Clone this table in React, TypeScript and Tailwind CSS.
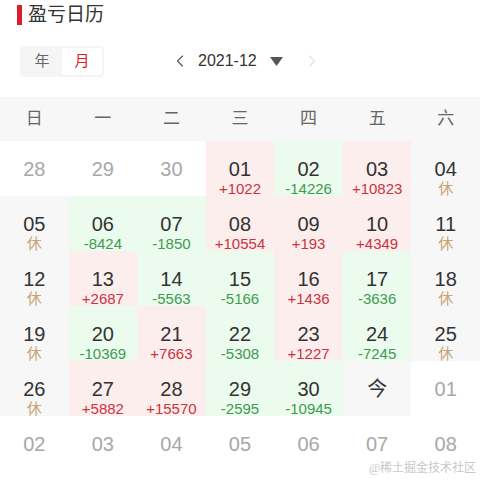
import { ChevronLeft, ChevronRight } from "lucide-react";

type Day = {
  d: string;
  v?: string;
  kind: "out" | "rest" | "up" | "down" | "today";
};

const rows: Day[][] = [
  [
    { d: "28", kind: "out" },
    { d: "29", kind: "out" },
    { d: "30", kind: "out" },
    { d: "01", v: "+1022", kind: "up" },
    { d: "02", v: "-14226", kind: "down" },
    { d: "03", v: "+10823", kind: "up" },
    { d: "04", v: "休", kind: "rest" },
  ],
  [
    { d: "05", v: "休", kind: "rest" },
    { d: "06", v: "-8424", kind: "down" },
    { d: "07", v: "-1850", kind: "down" },
    { d: "08", v: "+10554", kind: "up" },
    { d: "09", v: "+193", kind: "up" },
    { d: "10", v: "+4349", kind: "up" },
    { d: "11", v: "休", kind: "rest" },
  ],
  [
    { d: "12", v: "休", kind: "rest" },
    { d: "13", v: "+2687", kind: "up" },
    { d: "14", v: "-5563", kind: "down" },
    { d: "15", v: "-5166", kind: "down" },
    { d: "16", v: "+1436", kind: "up" },
    { d: "17", v: "-3636", kind: "down" },
    { d: "18", v: "休", kind: "rest" },
  ],
  [
    { d: "19", v: "休", kind: "rest" },
    { d: "20", v: "-10369", kind: "down" },
    { d: "21", v: "+7663", kind: "up" },
    { d: "22", v: "-5308", kind: "down" },
    { d: "23", v: "+1227", kind: "up" },
    { d: "24", v: "-7245", kind: "down" },
    { d: "25", v: "休", kind: "rest" },
  ],
  [
    { d: "26", v: "休", kind: "rest" },
    { d: "27", v: "+5882", kind: "up" },
    { d: "28", v: "+15570", kind: "up" },
    { d: "29", v: "-2595", kind: "down" },
    { d: "30", v: "-10945", kind: "down" },
    { d: "今", kind: "today" },
    { d: "01", kind: "out" },
  ],
  [
    { d: "02", kind: "out" },
    { d: "03", kind: "out" },
    { d: "04", kind: "out" },
    { d: "05", kind: "out" },
    { d: "06", kind: "out" },
    { d: "07", kind: "out" },
    { d: "08", kind: "out" },
  ],
];

const weekdays = ["日", "一", "二", "三", "四", "五", "六"];

function Cell({ day }: { day: Day }) {
  const bg =
    day.kind === "up"
      ? "bg-[#fdeeee]"
      : day.kind === "down"
      ? "bg-[#ebfcee]"
      : day.kind === "rest" || day.kind === "today"
      ? "bg-[#f7f7f7]"
      : "bg-white";
  const valueColor =
    day.kind === "up" ? "text-[#c9343f]" : day.kind === "down" ? "text-[#3f9a4e]" : "text-[#c8a476]";

  return (
    <div className={`h-[55px] flex flex-col items-center pt-[16px] ${bg}`}>
      <div className={`text-[20px] leading-[24px] ${day.kind === "out" ? "text-[#a8a8a8]" : "text-[#333]"}`}>
        {day.d}
      </div>
      {day.v && <div className={`text-[15px] leading-[16px] ${valueColor}`}>{day.v}</div>}
    </div>
  );
}

export default function App() {
  return (
    <div
      className="w-[480px] h-[480px] bg-white relative overflow-hidden"
      style={{ fontFamily: '"Liberation Sans", "Noto Sans CJK SC", sans-serif' }}
    >
      <div className="flex items-center h-[28px] pl-[17px] pt-[2px]">
        <div className="w-[5px] h-[20px] bg-[#d9202a]" />
        <div className="ml-[6px] text-[19px] text-[#333]">盈亏日历</div>
      </div>

      <div className="flex items-center mt-[17px] h-[32px]">
        <div className="ml-[20px] flex p-[2px] bg-[#f5f5f5] rounded-[4px] w-[84px] h-[31px]">
          <div className="flex-1 flex items-center justify-center text-[15px] text-[#666]">年</div>
          <div className="flex-1 flex items-center justify-center text-[15px] text-[#d9202a] bg-white rounded-[3px]">
            月
          </div>
        </div>
        <ChevronLeft className="ml-[66px] w-[20px] h-[20px] text-[#555]" strokeWidth={1.3} />
        <div className="ml-[8px] text-[16px] text-[#333]">2021-12</div>
        <svg className="ml-[13px]" width="13" height="9" viewBox="0 0 13 9">
          <polygon points="0,0 13,0 6.5,9" fill="#555" />
        </svg>
        <ChevronRight className="ml-[19px] w-[20px] h-[20px] text-[#e3e3e3]" strokeWidth={1.3} />
      </div>

      <div className="mt-[20px] grid grid-cols-7 bg-[#f7f7f7] h-[44px]">
        {weekdays.map((w) => (
          <div key={w} className="flex items-center justify-center text-[17px] text-[#666]">
            {w}
          </div>
        ))}
      </div>

      <div className="grid grid-cols-7">
        {rows.flat().map((day, i) => (
          <Cell key={i} day={day} />
        ))}
      </div>

      <div
        className="absolute right-[4px] bottom-[3px] text-[12px] text-[#c8c8c8]"
        style={{ fontFamily: '"Liberation Serif", "Noto Sans CJK SC", serif' }}
      >
        @稀土掘金技术社区
      </div>
    </div>
  );
}
